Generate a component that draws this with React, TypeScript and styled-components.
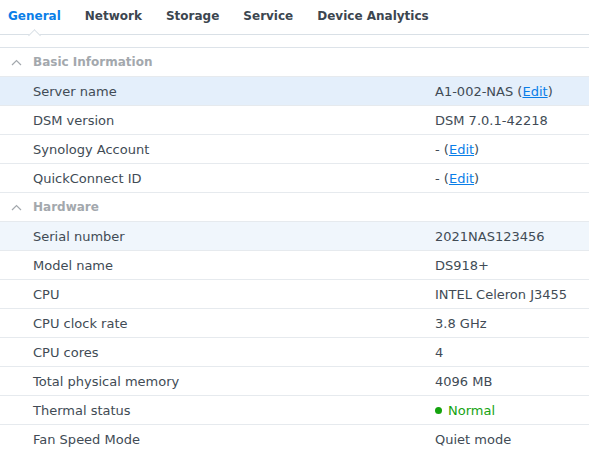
import React from "react";
import styled, { createGlobalStyle } from "styled-components";

const GlobalStyle = createGlobalStyle`
  html, body {
    margin: 0;
    padding: 0;
    background: #ffffff;
  }
  body {
    font-family: "DejaVu Sans", Verdana, sans-serif;
    color: #414b55;
  }
`;

const Page = styled.div`
  width: 589px;
  overflow: hidden;
`;

const TabBar = styled.div`
  display: flex;
  gap: 24px;
  height: 35px;
  padding-left: 8px;
  border-bottom: 1px solid #d9e0e6;
  box-sizing: border-box;
`;

const Tab = styled.div<{ $active?: boolean }>`
  position: relative;
  font-size: 12px;
  font-weight: bold;
  line-height: 32px;
  color: ${(p) => (p.$active ? "#0a7ee8" : "#3c4650")};

  ${(p) =>
    p.$active &&
    `
    &::after {
      content: "";
      position: absolute;
      left: 50%;
      bottom: -6px;
      width: 8px;
      height: 8px;
      margin-left: -4px;
      background: #ffffff;
      border-top: 1px solid #d9e0e6;
      border-left: 1px solid #d9e0e6;
      transform: rotate(45deg);
    }
  `}
`;

const List = styled.div`
  margin-top: 12px;
  border-top: 1px solid #dde3e9;
`;

const SectionHeader = styled.div`
  display: flex;
  align-items: center;
  height: 29px;
  box-sizing: border-box;
  border-bottom: 1px solid #e6eaee;
  padding-left: 11px;
  gap: 11px;
  font-size: 12px;
  font-weight: bold;
  color: #a3a8ad;
`;

const Row = styled.div<{ $tone?: "selected" | "hover" }>`
  display: grid;
  grid-template-columns: 435px 1fr;
  align-items: center;
  height: 29px;
  box-sizing: border-box;
  border-bottom: 1px solid #e6eaee;
  font-size: 13px;
  background: ${(p) =>
    p.$tone === "selected" ? "#e4effb" : p.$tone === "hover" ? "#f0f6fc" : "#ffffff"};
`;

const Label = styled.div`
  padding-left: 33px;
  white-space: nowrap;
`;

const Value = styled.div`
  white-space: nowrap;
`;

const EditLink = styled.a`
  color: #0a7ee8;
  text-decoration: underline;
  cursor: pointer;
`;

const Status = styled.span`
  display: inline-flex;
  align-items: center;
  gap: 6px;
  color: #16a312;
`;

const Dot = styled.span`
  width: 7px;
  height: 7px;
  border-radius: 50%;
  background: #14a30e;
`;

const Chevron = () => (
  <svg width="11" height="7" viewBox="0 0 11 7" fill="none">
    <polyline points="1,6 5.5,1.5 10,6" stroke="#a3a8ad" strokeWidth="1.2" />
  </svg>
);

const Editable = ({ text }: { text: string }) => (
  <>
    {text} (<EditLink>Edit</EditLink>)
  </>
);

type Item = { label: string; value: React.ReactNode; tone?: "selected" | "hover" };

const basic: Item[] = [
  { label: "Server name", value: <Editable text="A1-002-NAS" />, tone: "selected" },
  { label: "DSM version", value: "DSM 7.0.1-42218" },
  { label: "Synology Account", value: <Editable text="-" /> },
  { label: "QuickConnect ID", value: <Editable text="-" /> },
];

const hardware: Item[] = [
  { label: "Serial number", value: "2021NAS123456", tone: "hover" },
  { label: "Model name", value: "DS918+" },
  { label: "CPU", value: "INTEL Celeron J3455" },
  { label: "CPU clock rate", value: "3.8 GHz" },
  { label: "CPU cores", value: "4" },
  { label: "Total physical memory", value: "4096 MB" },
  {
    label: "Thermal status",
    value: (
      <Status>
        <Dot />
        Normal
      </Status>
    ),
  },
  { label: "Fan Speed Mode", value: "Quiet mode" },
];

const Section = ({ title, items }: { title: string; items: Item[] }) => (
  <>
    <SectionHeader>
      <Chevron />
      {title}
    </SectionHeader>
    {items.map((it) => (
      <Row key={it.label} $tone={it.tone}>
        <Label>{it.label}</Label>
        <Value>{it.value}</Value>
      </Row>
    ))}
  </>
);

export default function App() {
  const tabs = ["General", "Network", "Storage", "Service", "Device Analytics"];
  return (
    <Page>
      <GlobalStyle />
      <TabBar>
        {tabs.map((t, i) => (
          <Tab key={t} $active={i === 0}>
            {t}
          </Tab>
        ))}
      </TabBar>
      <List>
        <Section title="Basic Information" items={basic} />
        <Section title="Hardware" items={hardware} />
      </List>
    </Page>
  );
}
